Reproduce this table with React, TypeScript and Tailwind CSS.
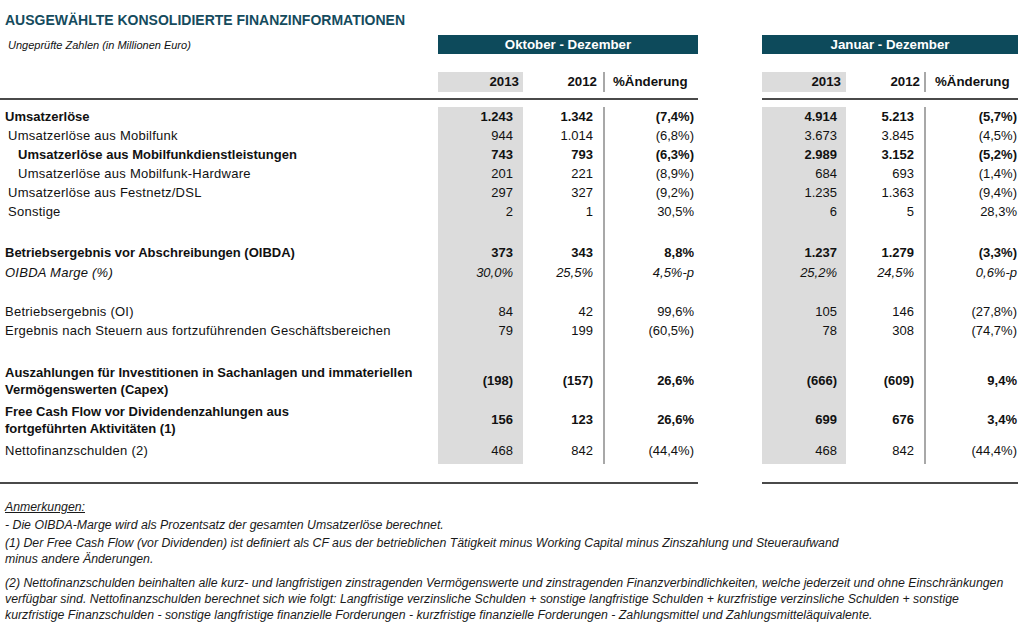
import React from 'react';

type Row = {
  label: React.ReactNode;
  labelCls: string;
  valCls: string;
  rowCls: string;
  v: string[];
};

const bold = 'font-bold';
const plain = 'font-normal';

const rows: Row[] = [
  { label: 'Umsatzerlöse', labelCls: 'pl-[5px] font-bold', valCls: bold, rowCls: 'h-[19px]', v: ['1.243', '1.342', '(7,4%)', '4.914', '5.213', '(5,7%)'] },
  { label: 'Umsatzerlöse aus Mobilfunk', labelCls: 'pl-[8px] tracking-[0.25px]', valCls: plain, rowCls: 'h-[19px]', v: ['944', '1.014', '(6,8%)', '3.673', '3.845', '(4,5%)'] },
  { label: 'Umsatzerlöse aus Mobilfunkdienstleistungen', labelCls: 'pl-[18px] font-bold', valCls: bold, rowCls: 'h-[19px]', v: ['743', '793', '(6,3%)', '2.989', '3.152', '(5,2%)'] },
  { label: 'Umsatzerlöse aus Mobilfunk-Hardware', labelCls: 'pl-[18px] tracking-[0.25px]', valCls: plain, rowCls: 'h-[19px]', v: ['201', '221', '(8,9%)', '684', '693', '(1,4%)'] },
  { label: 'Umsatzerlöse aus Festnetz/DSL', labelCls: 'pl-[8px] tracking-[0.25px]', valCls: plain, rowCls: 'h-[19px]', v: ['297', '327', '(9,2%)', '1.235', '1.363', '(9,4%)'] },
  { label: 'Sonstige', labelCls: 'pl-[8px] tracking-[0.25px]', valCls: plain, rowCls: 'h-[19px]', v: ['2', '1', '30,5%', '6', '5', '28,3%'] },
  { label: '', labelCls: '', valCls: plain, rowCls: 'h-[22px]', v: ['', '', '', '', '', ''] },
  { label: 'Betriebsergebnis vor Abschreibungen (OIBDA)', labelCls: 'pl-[5px] font-bold', valCls: bold, rowCls: 'h-[19px]', v: ['373', '343', '8,8%', '1.237', '1.279', '(3,3%)'] },
  { label: 'OIBDA Marge (%)', labelCls: 'pl-[5px] italic tracking-[0.25px]', valCls: 'italic', rowCls: 'h-[21px]', v: ['30,0%', '25,5%', '4,5%-p', '25,2%', '24,5%', '0,6%-p'] },
  { label: '', labelCls: '', valCls: plain, rowCls: 'h-[19px]', v: ['', '', '', '', '', ''] },
  { label: 'Betriebsergebnis (OI)', labelCls: 'pl-[5px] tracking-[0.25px]', valCls: plain, rowCls: 'h-[19px]', v: ['84', '42', '99,6%', '105', '146', '(27,8%)'] },
  { label: 'Ergebnis nach Steuern aus fortzuführenden Geschäftsbereichen', labelCls: 'pl-[5px] tracking-[0.25px]', valCls: plain, rowCls: 'h-[19px]', v: ['79', '199', '(60,5%)', '78', '308', '(74,7%)'] },
  { label: '', labelCls: '', valCls: plain, rowCls: 'h-[21px]', v: ['', '', '', '', '', ''] },
  {
    label: (
      <>
        Auszahlungen für Investitionen in Sachanlagen und immateriellen
        <br />
        Vermögenswerten (Capex)
      </>
    ),
    labelCls: 'pl-[5px] font-bold leading-[17px]',
    valCls: bold,
    rowCls: 'h-[39px]',
    v: ['(198)', '(157)', '26,6%', '(666)', '(609)', '9,4%'],
  },
  {
    label: (
      <>
        Free Cash Flow vor Dividendenzahlungen aus
        <br />
        fortgeführten Aktivitäten (1)
      </>
    ),
    labelCls: 'pl-[5px] font-bold leading-[17px]',
    valCls: bold,
    rowCls: 'h-[40px]',
    v: ['156', '123', '26,6%', '699', '676', '3,4%'],
  },
  { label: 'Nettofinanzschulden (2)', labelCls: 'pl-[5px] self-start pt-px tracking-[0.25px]', valCls: 'font-normal self-start pt-px', rowCls: 'h-[24px]', v: ['468', '842', '(44,4%)', '468', '842', '(44,4%)'] },
];

function Band({ title }: { title: string }) {
  return (
    <div className="h-[19px] bg-[#0d4a5b] text-white font-bold text-[13.3px] flex items-center justify-center">
      {title}
    </div>
  );
}

export default function App() {
  return (
    <div
      className="w-[1023px] h-[627px] bg-white text-[#111] overflow-hidden"
      style={{ fontFamily: '"Liberation Sans", Arial, sans-serif' }}
    >
      {/* header */}
      <div className="flex">
        <div className="w-[438px] pt-[11px]">
          <div className="pl-[5px] text-[14px] font-bold text-[#154b5d] leading-[18px]">
            AUSGEWÄHLTE KONSOLIDIERTE FINANZINFORMATIONEN
          </div>
          <div className="pl-[8px] mt-[9px] text-[11px] italic leading-[14px]">
            Ungeprüfte Zahlen (in Millionen Euro)
          </div>
        </div>
        <div className="w-[260px] pt-[35px]">
          <Band title="Oktober - Dezember" />
          <div className="mt-[18px] flex h-[20px] items-center font-bold text-[13.3px]">
            <div className="w-[85px] h-full bg-[#dcdcdc] flex items-center justify-end pr-[4px]">2013</div>
            <div className="w-[80px] h-full flex items-center justify-end pr-[6px]">2012</div>
            <div className="w-[95px] h-full border-l-2 border-[#a8a8a8] flex items-center pl-[8px]">%Änderung</div>
          </div>
        </div>
        <div className="w-[64px]" />
        <div className="w-[256px] pt-[35px]">
          <Band title="Januar - Dezember" />
          <div className="mt-[18px] flex h-[20px] items-center font-bold text-[13.3px]">
            <div className="w-[84px] h-full bg-[#dcdcdc] flex items-center justify-end pr-[5px]">2013</div>
            <div className="w-[78px] h-full flex items-center justify-end pr-[4px]">2012</div>
            <div className="w-[94px] h-full border-l-2 border-[#a8a8a8] flex items-center pl-[9px]">%Änderung</div>
          </div>
        </div>
      </div>

      {/* rule under header */}
      <div className="flex mt-[6px]">
        <div className="w-[698px] h-[2px] bg-[#4a4a4a]" />
        <div className="w-[64px]" />
        <div className="w-[256px] h-[2px] bg-[#4a4a4a]" />
      </div>

      {/* body */}
      <div className="mt-[7px] text-[13px]">
        {rows.map((r, i) => (
          <div key={i} className={`flex items-center ${r.rowCls}`}>
            <div className={`w-[438px] whitespace-nowrap ${r.labelCls}`}>{r.label}</div>
            <div className="w-[85px] h-full bg-[#dcdcdc] flex items-center justify-end pr-[10px]">
              <span className={r.valCls}>{r.v[0]}</span>
            </div>
            <div className="w-[80px] h-full flex items-center justify-end pr-[10px]">
              <span className={r.valCls}>{r.v[1]}</span>
            </div>
            <div className="w-[95px] h-full border-l-2 border-[#a8a8a8] flex items-center justify-end pr-[4px]">
              <span className={r.valCls}>{r.v[2]}</span>
            </div>
            <div className="w-[64px]" />
            <div className="w-[84px] h-full bg-[#dcdcdc] flex items-center justify-end pr-[9px]">
              <span className={r.valCls}>{r.v[3]}</span>
            </div>
            <div className="w-[78px] h-full flex items-center justify-end pr-[10px]">
              <span className={r.valCls}>{r.v[4]}</span>
            </div>
            <div className="w-[94px] h-full border-l-2 border-[#a8a8a8] flex items-center justify-end pr-[1px]">
              <span className={r.valCls}>{r.v[5]}</span>
            </div>
          </div>
        ))}
      </div>

      {/* bottom rule */}
      <div className="flex mt-[18px]">
        <div className="w-[698px] h-[2px] bg-[#4a4a4a]" />
        <div className="w-[64px]" />
        <div className="w-[256px] h-[2px] bg-[#4a4a4a]" />
      </div>

      {/* notes */}
      <div className="pl-[5px] mt-[15px] text-[12.3px] italic leading-[16px] text-[#1a1a1a] whitespace-nowrap">
        <p className="underline">Anmerkungen:</p>
        <p className="mt-[2px]">- Die OIBDA-Marge wird als Prozentsatz der gesamten Umsatzerlöse berechnet.</p>
        <p className="mt-[2px]">
          (1) Der Free Cash Flow (vor Dividenden) ist definiert als CF aus der betrieblichen Tätigkeit minus Working Capital minus Zinszahlung und Steueraufwand
          <br />
          minus andere Änderungen.
        </p>
        <p className="mt-[8px]">
          (2) Nettofinanzschulden beinhalten alle kurz- und langfristigen zinstragenden Vermögenswerte und zinstragenden Finanzverbindlichkeiten, welche jederzeit und ohne Einschränkungen
          <br />
          verfügbar sind. Nettofinanzschulden berechnet sich wie folgt: Langfristige verzinsliche Schulden + sonstige langfristige Schulden + kurzfristige verzinsliche Schulden + sonstige
          <br />
          kurzfristige Finanzschulden - sonstige langfristige finanzielle Forderungen - kurzfristige finanzielle Forderungen - Zahlungsmittel und Zahlungsmitteläquivalente.
        </p>
      </div>
    </div>
  );
}
